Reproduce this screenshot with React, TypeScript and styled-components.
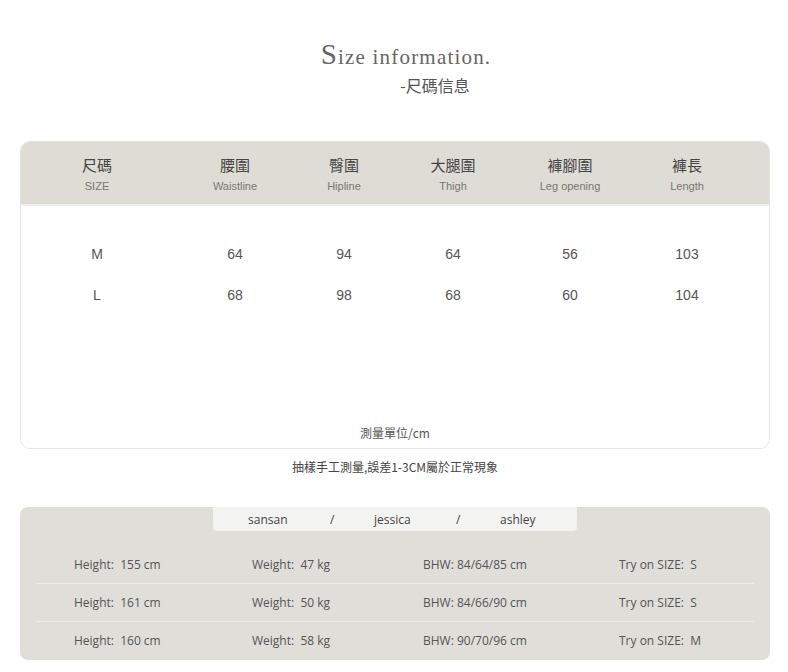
import React from "react";
import styled, { createGlobalStyle } from "styled-components";

const Global = createGlobalStyle`
  body { margin: 0; background: #fff; font-family: "Liberation Sans", "Noto Sans CJK TC", sans-serif; color: #555; }
`;

const Page = styled.div`
  width: 788px;
  height: 672px;
  padding: 38px 18px 0 20px;
  box-sizing: border-box;
  overflow: hidden;
`;

const Title = styled.div`
  text-align: center;
  font-family: "Liberation Serif", serif;
  font-size: 21px;
  color: #666;
  letter-spacing: 1.2px;
  margin-left: 22px;
  span { font-size: 29px; }
`;

const SubTitle = styled.div`
  text-align: center;
  font-size: 16px;
  color: #555;
  margin: 2px 0 0 80px;
  font-family: "Noto Sans CJK TC", sans-serif;
`;

const Table = styled.div`
  margin-top: 44px;
  border-radius: 10px;
  border: 1px solid #e4e4e0;
  overflow: hidden;
`;

const Cols = styled.div`
  display: grid;
  grid-template-columns: 152px 124px 94px 124px 110px 124px;
`;

const Head = styled(Cols)`
  background: #dedcd5;
  height: 62px;
  align-content: center;
  border-bottom: 2px solid #f0f0ec;
`;

const HeadCell = styled.div`
  text-align: center;
  div:first-child { font-family: "Noto Sans CJK TC", sans-serif; font-size: 15px; color: #444; }
  div:last-child { font-size: 11px; color: #777; margin-top: 5px; }
`;

const Body = styled.div`
  background: #fff;
  height: 242px;
  display: flex;
  flex-direction: column;
  padding-top: 40px;
  box-sizing: border-box;
`;

const Row = styled(Cols)`
  height: 41px;
  font-size: 14px;
  color: #555;
`;

const Cell = styled.div`
  text-align: center;
`;

const Unit = styled.div`
  margin-top: auto;
  margin-bottom: 7px;
  text-align: center;
  font-size: 12px;
  color: #555;
  font-family: "Noto Sans CJK TC", sans-serif;
`;

const Note = styled.div`
  text-align: center;
  font-size: 12px;
  color: #444;
  margin-top: 9px;
  font-family: "Noto Sans CJK TC", sans-serif;
`;

const Models = styled.div`
  margin-top: 32px;
  background: #dfded9;
  border-radius: 8px;
  height: 153px;
  padding: 0 16px;
`;

const Tabs = styled.div`
  margin-left: 177px;
  width: 364px;
  height: 24px;
  background: #f3f3f1;
  border-radius: 0 0 4px 4px;
  display: flex;
  align-items: center;
  font-family: "Open Sans", sans-serif;
  font-size: 12px;
  color: #444;
  padding-left: 35px;
  box-sizing: border-box;
`;

const Tab = styled.span<{ w?: number }>`
  display: inline-block;
  width: ${(p) => (p.w ? `${p.w}px` : "auto")};
`;

const ModelList = styled.div`
  margin-top: 15px;
`;

const ModelRow = styled.div<{ last?: boolean }>`
  display: grid;
  grid-template-columns: 178px 171px 196px 1fr;
  padding-left: 38px;
  height: 37px;
  align-items: center;
  font-family: "Open Sans", sans-serif;
  font-size: 12px;
  color: #555;
  border-bottom: ${(p) => (p.last ? "none" : "1px solid #ecebe7")};
`;

const heads = [
  ["尺碼", "SIZE"],
  ["腰圍", "Waistline"],
  ["臀圍", "Hipline"],
  ["大腿圍", "Thigh"],
  ["褲腳圍", "Leg opening"],
  ["褲長", "Length"],
];
const rows = [
  ["M", "64", "94", "64", "56", "103"],
  ["L", "68", "98", "68", "60", "104"],
];
const models = [
  ["155", "47", "84/64/85", "S"],
  ["161", "50", "84/66/90", "S"],
  ["160", "58", "90/70/96", "M"],
];

export default function App() {
  return (
    <Page>
      <Global />
      <Title><span>S</span>ize information.</Title>
      <SubTitle>-尺碼信息</SubTitle>
      <Table>
        <Head>
          {heads.map(([zh, en]) => (
            <HeadCell key={en}><div>{zh}</div><div>{en}</div></HeadCell>
          ))}
        </Head>
        <Body>
          {rows.map((r) => (
            <Row key={r[0]}>{r.map((v, i) => <Cell key={i}>{v}</Cell>)}</Row>
          ))}
          <Unit>測量單位/cm</Unit>
        </Body>
      </Table>
      <Note>抽樣手工測量,誤差1-3CM屬於正常現象</Note>
      <Models>
        <Tabs>
          <Tab w={82}>sansan</Tab>
          <Tab w={44}>/</Tab>
          <Tab w={82}>jessica</Tab>
          <Tab w={44}>/</Tab>
          <Tab>ashley</Tab>
        </Tabs>
        <ModelList>
          {models.map((m, i) => (
            <ModelRow key={i} last={i === models.length - 1}>
              <div>Height:&nbsp; {m[0]} cm</div>
              <div>Weight:&nbsp; {m[1]} kg</div>
              <div>BHW: {m[2]} cm</div>
              <div>Try on SIZE:&nbsp; {m[3]}</div>
            </ModelRow>
          ))}
        </ModelList>
      </Models>
    </Page>
  );
}
